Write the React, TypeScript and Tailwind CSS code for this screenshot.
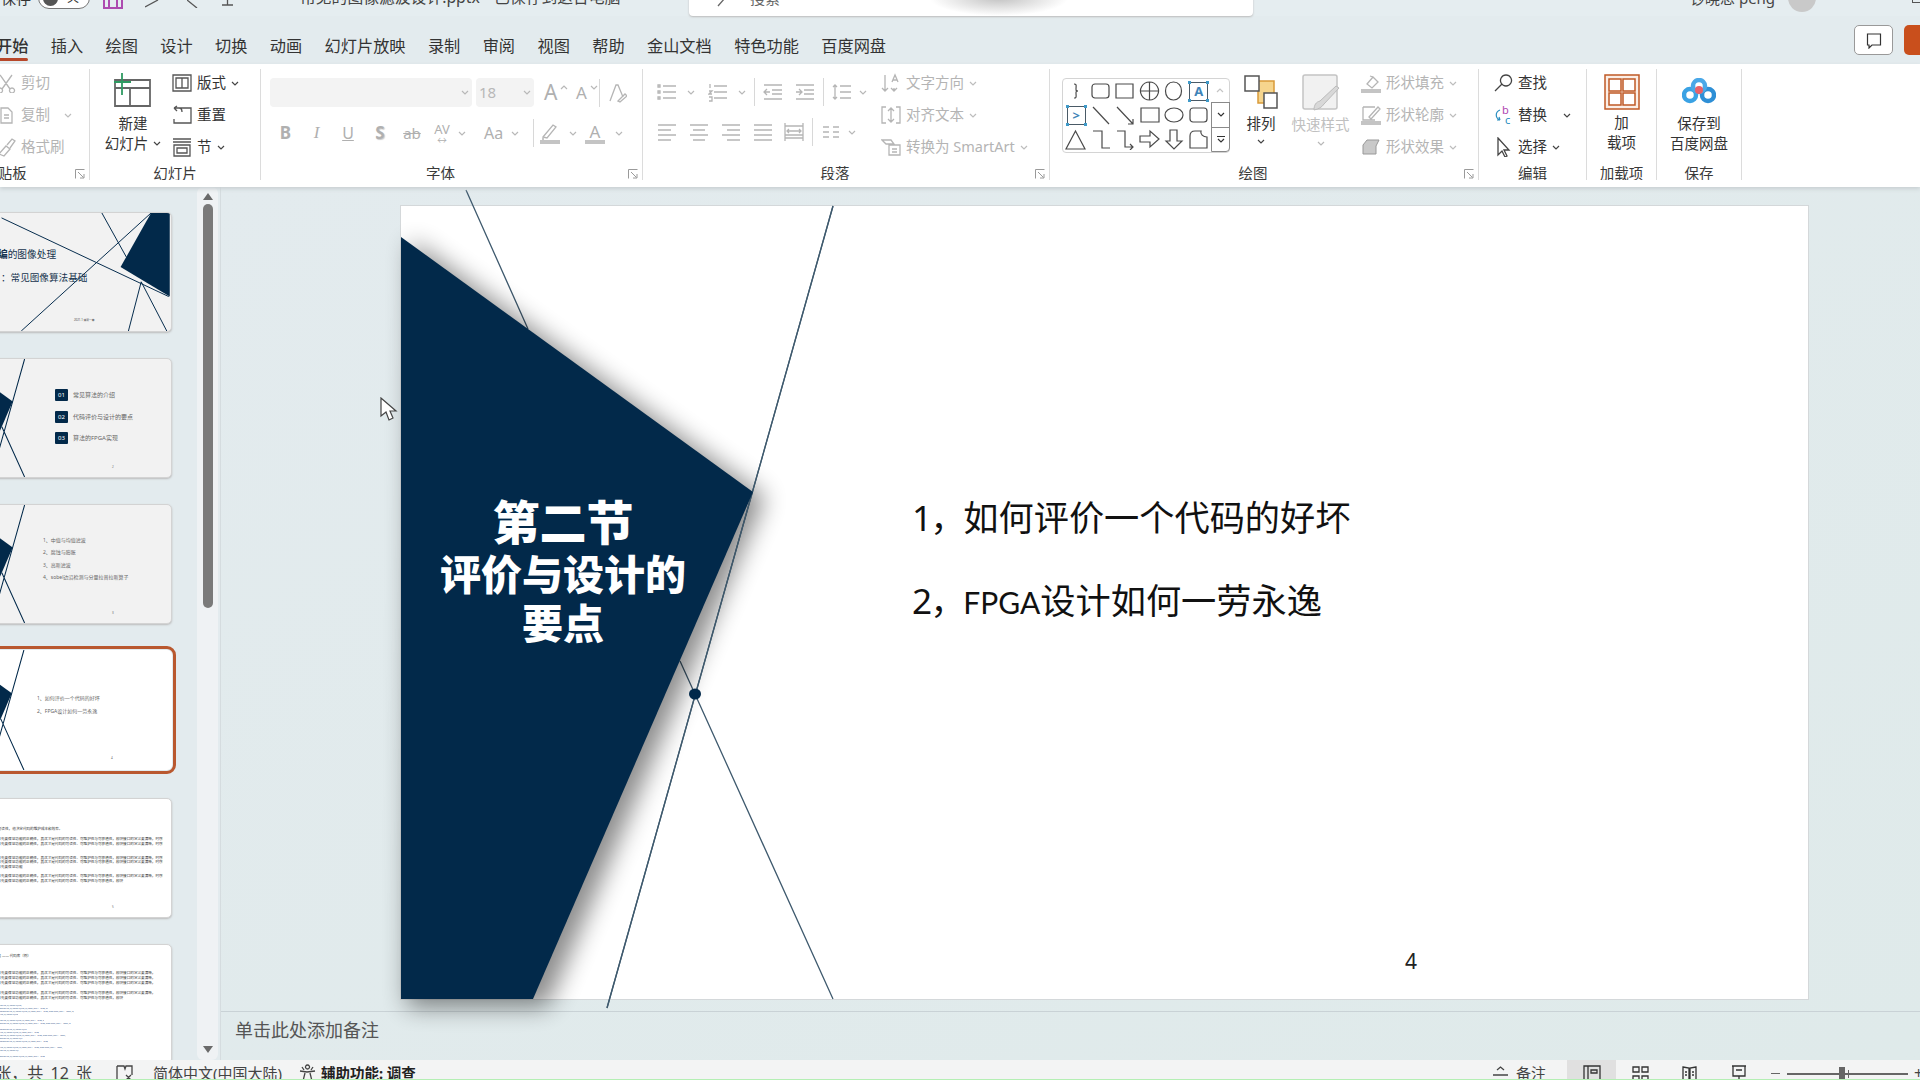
import React from 'react';

const NAVY = '#02294a';

function Chev({ c = '#b8b8b8', className = '' }: { c?: string; className?: string }) {
	return (
		<svg width="8" height="5" viewBox="0 0 8 5" className={`shrink-0 ${className}`} fill="none" stroke={c} strokeWidth="1.2">
			<path d="M1 1l3 3 3-3" />
		</svg>
	);
}

function Launcher() {
	return (
		<svg width="10" height="10" viewBox="0 0 10 10" className="absolute right-[4px] top-[3px]" fill="none" stroke="#9a9a9a" strokeWidth="1">
			<path d="M.5 9.5v-9h9M3 3l5.5 5.5M5 9h4V5" />
		</svg>
	);
}

function Group({ width, label, launcher, labelClass = '', children }: { width: string; label: string; launcher?: boolean; labelClass?: string; children: React.ReactNode }) {
	return (
		<div className={`${width} relative h-[111px] shrink-0 border-r border-[#dcdcdc]`}>
			<div className="flex h-[97px]">{children}</div>
			<div className="relative flex h-[14px] items-center justify-center overflow-hidden text-[14.5px] leading-[14px] text-[#3a3a3a]">
				<span className={`whitespace-nowrap ${labelClass}`}>{label}</span>
				{launcher && <Launcher />}
			</div>
		</div>
	);
}

function MiniRow({ icon, text, chev, dark, chevClass = 'ml-[5px]' }: { icon: React.ReactNode; text: string; chev?: boolean; dark?: boolean; chevClass?: string }) {
	return (
		<div className={`flex h-8 items-center whitespace-nowrap text-[14.5px] ${dark ? 'text-[#333]' : 'text-[#b4b4b4]'}`}>
			<span className="mr-[5px] flex w-[20px] shrink-0 justify-center">{icon}</span>
			{text}
			{chev && <Chev c={dark ? '#444' : '#bdbdbd'} className={chevClass} />}
		</div>
	);
}

const G = '#b5b5b5';

function Lines({ d, w = 20, h = 20, c = G, sw = 1.3 }: { d: string; w?: number; h?: number; c?: string; sw?: number }) {
	return (
		<svg width={w} height={h} viewBox={`0 0 ${w} ${h}`} fill="none" stroke={c} strokeWidth={sw} className="shrink-0">
			<path d={d} />
		</svg>
	);
}

const shapes = [
	'M9 3c3 0 2 2 2 5s1 2 2 2c-1 0-2-1-2 2s1 5-2 5',
	'M5 3h11a3 3 0 0 1 3 3v8a3 3 0 0 1-3 3H5a3 3 0 0 1-3-3V6a3 3 0 0 1 3-3z',
	'M2 3h17v14H2z',
	'M10.5 1a9 9 0 1 0 .01 0zM10.5 1v18M1.5 10h18',
	'M10.5 1c5 0 8 4 8 9s-3 9-8 9-8-4-8-9 3-9 8-9z',
	'',
	'',
	'M3 2l16 17',
	'M3 2l16 17m0-5v5h-5',
	'M2 3h18v14H2z',
	'M11 3c5 0 9 3 9 7s-4 7-9 7-9-3-9-7 4-7 9-7z',
	'M5 3h11a3 3 0 0 1 3 3v8a3 3 0 0 1-3 3H5a3 3 0 0 1-3-3V6a3 3 0 0 1 3-3z',
	'M10.500 2L20 20H1z',
	'M3 2h9v17h8',
	'M3 2h8v16h8m-3-3l3 3-3 3',
	'M1 7h10V2l9 8-9 8v-5H1z',
	'M7 1h7v11h5l-8 8-8-8h4z',
	'M2 7c0-3 2-5 5-5h6c-1 3 2 6 6 6v11H2z',
];

function Gallery() {
	return (
		<div className="ml-[12px] mt-[9px] flex h-[75px] w-[168px] rounded-[4px] border border-[#d4d4d4]">
			<div className="grid flex-1 grid-cols-6 grid-rows-3 py-[1px] pl-[1px]">
				{shapes.map((d, i) => (
					<div key={i} className="flex items-center justify-center">
						{i === 5 || i === 6 ? (
							<div className="relative flex h-[19px] w-[19px] items-center justify-center border border-[#4a5a66] text-[13px] font-bold leading-none text-[#3f84b8]">
								{i === 5 ? 'A' : '>'}
								<span className="absolute -left-[2px] -top-[2px] h-[3px] w-[3px] bg-[#3f9ac9]" />
								<span className="absolute -right-[2px] -top-[2px] h-[3px] w-[3px] bg-[#3f9ac9]" />
								<span className="absolute -bottom-[2px] -left-[2px] h-[3px] w-[3px] bg-[#3f9ac9]" />
								<span className="absolute -bottom-[2px] -right-[2px] h-[3px] w-[3px] bg-[#3f9ac9]" />
							</div>
						) : (
							<Lines d={d} w={22} h={21} c="#4a4a4a" sw={1.2} />
						)}
					</div>
				))}
			</div>
			<div className="flex w-[18px] flex-col">
				<div className="flex flex-1 items-center justify-center"><Chev c="#c4c4c4" className="rotate-180" /></div>
				<div className="-mr-px flex flex-1 items-center justify-center border border-[#8a8a8a]"><Chev c="#333" /></div>
				<div className="-mr-px -mt-px flex flex-1 flex-col items-center justify-center gap-[1px] rounded-br-[4px] border border-[#8a8a8a]">
					<div className="h-px w-[8px] bg-[#333]" />
					<Chev c="#333" />
				</div>
			</div>
		</div>
	);
}

function SlideArt() {
	return (
		<svg viewBox="0 0 1407 793" className="absolute inset-0 h-full w-full">
			<path d="M0 31L352 286 132 793H0z" fill={NAVY} />
			<path d="M65 -16L127 123M432 0L206 802M279 455L432 793" stroke={NAVY} strokeWidth="7" fill="none" />
		</svg>
	);
}

function Thumb({ children, selected, white, mt, art = true, num }: { children?: React.ReactNode; selected?: boolean; white?: boolean; mt?: string; art?: boolean; num?: string }) {
	return (
		<div
			className={`relative -ml-[42px] h-[120px] w-[214px] shrink-0 overflow-hidden rounded-[5px] ${white ? 'bg-white' : 'bg-[#f2f2f2]'} ${
				selected ? 'outline-[3px] outline-offset-[1px] outline-[#b9582f]' : 'border border-[#d3d3d3] shadow-[0_1px_2px_#bbb]'
			} ${mt ?? ''}`}
		>
			{art && <SlideArt />}
			{children}
			{num && <span className="absolute left-[153px] top-[107px] text-[3px] leading-none text-[#666]">{num}</span>}
		</div>
	);
}

function TinyRow({ children, className }: { children: React.ReactNode; className: string }) {
	return <p className={`absolute whitespace-nowrap leading-none ${className}`}>{children}</p>;
}

const para =
	'在代码设计过程中，首先要保证功能的正确性，其次才是代码的可读性、可维护性与可移植性，模块接口的定义要清晰，时序要收敛，面积和速度要平衡，参数化设计可以提高复用的效率，避免重复劳动。';

function ThumbPanel() {
	return (
		<div className="flex h-full w-[221px] shrink-0 overflow-hidden border-r border-[#d5dcdf] bg-[#e3ebee]">
			<div className="flex w-[197px] shrink-0 flex-col gap-[26px] pt-[25px]">
				<Thumb art={false}>
					<svg viewBox="0 0 213 120" className="absolute inset-0 h-full w-full">
						<path d="M194 0h19v85l-50-30z" fill={NAVY} />
						<path d="M42 5L212 85M62 120L194 0M144 0L169 45M171 120L184 70L210 120" stroke={NAVY} strokeWidth="1" fill="none" />
					</svg>
					<TinyRow className="left-[39px] top-[37px] text-[9.700px] text-[#16344e]">
						<b>编</b>的图像处理
					</TinyRow>
					<TinyRow className="left-[42px] top-[60px] text-[9.600px] text-[#16344e]">：常见图像算法基础</TinyRow>
					<TinyRow className="left-[115px] top-[106px] text-[2.800px] text-[#444]">2021.1 编著一审</TinyRow>
				</Thumb>
				<Thumb num="2">
					{['常见算法的介绍', '代码评价与设计的要点', '算法的FPGA实现'].map((t, i) => (
						<div key={t} className="absolute left-[96px] flex items-center gap-[5px]" style={{ top: 30 + i * 21.500 }}>
							<span className="flex h-[12px] w-[13px] items-center justify-center rounded-[1px] bg-[#02294a] text-[6px] leading-none text-white">0{i + 1}</span>
							<span className="whitespace-nowrap text-[6px] leading-none text-[#666]">{t}</span>
						</div>
					))}
				</Thumb>
				<Thumb num="3">
					{['1、中值与均值滤波', '2、腐蚀与膨胀', '3、高斯滤波', '4、sobel边沿检测与分量拉普拉斯算子'].map((t, i) => (
						<TinyRow key={t} className="left-[84px] text-[5px] text-[#666]">
							<span style={{ position: 'relative', top: 33 + i * 12.400 }}>{t}</span>
						</TinyRow>
					))}
				</Thumb>
				<Thumb selected white num="4">
					<TinyRow className="left-[79px] top-[46px] text-[5px] text-[#666]">1、如何评价一个代码的好坏</TinyRow>
					<TinyRow className="left-[79px] top-[59px] text-[5px] text-[#666]">2、FPGA设计如何一劳永逸</TinyRow>
				</Thumb>
				<Thumb white art={false} mt="mt-[2px]" num="5">
					<TinyRow className="left-[4px] top-[10px] text-[3.500px] text-[#333]">代码评价与设计</TinyRow>
					<TinyRow className="left-[28px] top-[28px] text-[3.600px] text-[#333]">代码的可读性，他决定代码的维护成本和效率。</TinyRow>
					{[38, 43, 57, 61, 66, 75, 80].map((y, i) => (
						<p key={y} className="absolute left-[6px] w-[198px] overflow-hidden whitespace-nowrap text-[3.600px] leading-none text-[#333]" style={{ top: y }}>
							{i === 6 ? para.slice(0, 44) : i === 4 ? para.slice(0, 16) : para + para}
						</p>
					))}
				</Thumb>
				<Thumb white art={false}>
					<TinyRow className="left-[28px] top-[9px] text-[3.500px] text-[#333]">一劳永逸 —— 代码库（例）</TinyRow>
					{[26, 31, 36, 46, 51].map((y, i) => (
						<p key={y} className="absolute left-[6px] w-[190px] overflow-hidden whitespace-nowrap text-[3.600px] leading-none text-[#333]" style={{ top: y }}>
							{i === 4 ? para.slice(0, 44) : para + para}
						</p>
					))}
					{[57, 60, 63, 66, 69, 75, 78, 84, 87, 90, 93, 96, 102, 105, 111].map((y, i) => (
						<p key={y} className="absolute overflow-hidden whitespace-nowrap text-[2.200px] leading-none text-[#33558a]" style={{ top: y, left: 6 + (i % 4) * 3 }}>
							{'always @(posedge clk or negedge rst_n) begin if(!rst_n) data_out <= 8\'d0; else data_out <= data_in;'.slice(0, 30 + ((i * 23) % 70))}
						</p>
					))}
				</Thumb>
			</div>
			<div className="flex h-[873px] w-[21px] shrink-0 flex-col items-center rounded-[6px] bg-[#eff2f4] pt-[6px]">
				<div className="h-0 w-0 border-x-[5px] border-b-[7px] border-x-transparent border-b-[#6a6a6a]" />
				<div className="mt-[4px] h-[404px] w-[10px] rounded-[5px] bg-[#7a7a7a]" />
				<div className="mb-[7px] mt-auto h-0 w-0 border-x-[5px] border-t-[7px] border-x-transparent border-t-[#6a6a6a]" />
			</div>
		</div>
	);
}

function MainSlide() {
	return (
		<div className="relative h-[793px] w-[1407px] bg-white shadow-[0_0_0_1px_#d4d8da]">
			<svg viewBox="0 0 1407 793" className="absolute inset-0 h-full w-full overflow-visible">
				<defs>
					<filter id="sh" x="-20%" y="-20%" width="150%" height="140%">
						<feGaussianBlur stdDeviation="12" />
					</filter>
				</defs>
				<path d="M65 -16L127 123M432 0L206 802M279 455L432 793" stroke="#3f5a6e" strokeWidth="1.300" fill="none" />
				<path d="M10 34L364 291 146 801H6z" fill="#000" opacity=".45" filter="url(#sh)" />
				<path d="M432 0L206 802" stroke="#3f5a6e" strokeWidth="1.300" fill="none" />
				<path d="M0 31L352 286 132 793H0z" fill={NAVY} />
				<ellipse cx="294" cy="488" rx="6" ry="5.500" fill={NAVY} />
			</svg>
			<div className="absolute left-[8px] top-[289px] w-[308px] text-center font-black text-white">
				<p className="text-[47px] leading-[54px]">第二节</p>
				<p className="text-[41px] leading-[50px]">评价与设计的</p>
				<p className="text-[41px] leading-[48px]">要点</p>
			</div>
			<p className="absolute left-[511px] top-[286px] whitespace-nowrap text-[35.2px] leading-[50px] text-[#111]">
				<span className="tracking-[-2px]">1，</span>如何评价一个代码的好坏
			</p>
			<p className="absolute left-[511px] top-[369px] whitespace-nowrap text-[35.2px] leading-[50px] text-[#111]">
				<span className="tracking-[-2px]">2，</span>
				<span className="font-['Lato',sans-serif] text-[30px]">FPGA</span>设计如何一劳永逸
			</p>
			<p className="absolute left-[1004px] top-[744px] text-[21px] leading-[22px] text-[#222]">4</p>
		</div>
	);
}

const tabs = ['插入', '绘图', '设计', '切换', '动画', '幻灯片放映', '录制', '审阅', '视图', '帮助', '金山文档', '特色功能', '百度网盘'];

export default function App() {
	return (
		<div className="relative h-screen w-full overflow-hidden bg-[#e3ebee] font-['Noto_Sans','Noto_Sans_CJK_SC',sans-serif] text-[#333]">
			{/* title bar, mostly cut off at the top */}
			<div className="-mt-[20px] flex h-[36px] items-center whitespace-nowrap bg-[#e5edf0] text-[15px]">
				<span className="w-[30px] shrink-0 pl-px">保存</span>
				<div className="ml-[8px] flex h-[22px] w-[52px] shrink-0 items-center justify-between rounded-full border border-[#777] bg-white px-[4px]">
					<div className="h-[15px] w-[15px] rounded-full bg-[#555]" />
					<span className="pr-[6px] text-[12px]">关</span>
				</div>
				<svg width="20" height="22" viewBox="0 0 20 22" className="ml-[13px] shrink-0" fill="none" stroke="#ad4bb0" strokeWidth="2">
					<path d="M1 1h18v20H1zM6 12h8v9H6z" />
				</svg>
				<div className="ml-[22px]"><Lines d="M0 19L13 12" w={20} c="#555" /></div>
				<div className="ml-[22px]"><Lines d="M0 12L10 20" w={20} c="#555" /></div>
				<div className="ml-[15px]"><Lines d="M0 17h11M5.500 17V10" w={20} c="#555" /></div>
				<span className="ml-[20px] h-[2px] w-[2px] shrink-0 rounded-full bg-[#555]" />
				<span className="ml-[36px] w-[304px] shrink-0 text-[15.800px] text-[#444]">常见的图像滤波设计.pptx • 已保存到这台电脑 ˅</span>
				<div className="relative ml-[85px] flex h-[36px] w-[564px] shrink-0 items-center rounded-[4px] bg-white pl-[26px] shadow-[0_1px_2px_#bbb]">
					<Lines d="M14 1a5 5 0 1 0 .01 0M10 10l-7 8" c="#666" />
					<span className="ml-[15px] text-[15px] text-[#666]">搜索</span>
					<div className="absolute left-[240px] top-0 h-[36px] w-[140px] bg-[radial-gradient(ellipse_at_center,#c2c2c2,transparent_70%)]" />
				</div>
				<span className="ml-[437px] w-[85px] shrink-0 text-[15px] text-[#444]">钞晓忠 peng</span>
				<div className="ml-[13px] h-[28px] w-[28px] shrink-0 rounded-full bg-[#c9c9c9]" />
				<div className="ml-[96px] h-[10px] w-[10px] shrink-0 border border-[#555]" />
			</div>

			{/* tabs */}
			<div className="flex h-[48px] items-center gap-[22.4px] whitespace-nowrap pt-[12px] text-[16.2px] text-[#333]">
				<div className="relative -ml-[4px] font-medium">
					开始
					<div className="absolute bottom-[-3px] left-0 h-[3px] w-full rounded-[2px] bg-[#b7472a]" />
				</div>
				{tabs.map((t) => (
					<span key={t}>{t}</span>
				))}
				<div className="-mr-[10px] -mt-[12px] ml-auto flex items-center gap-[11px]">
					<div className="flex h-[30px] w-[39px] items-center justify-center rounded-[5px] border border-[#999] bg-white">
						<Lines d="M1.500 2h13v11H6l-3 3v-3H1.500z" w={16} h={17} c="#333" sw={1.200} />
					</div>
					<div className="h-[30px] w-[26px] rounded-[5px] bg-[#c94f1c]" />
				</div>
			</div>

			{/* ribbon */}
			<div className="relative z-10 flex h-[123px] bg-white pt-[5px] shadow-[0_2px_4px_#c8cfd2]">
				<Group width="w-[90px]" label="剪贴板" launcher labelClass="-ml-[79px]">
					<div className="-ml-[4px] -mt-[2px] w-[90px] text-[#b4b4b4]">
						<MiniRow icon={<Lines d="M4 2l10 14M16 2L6 16M4 15a2.500 2.500 0 1 0 .01 0M16 15a2.500 2.500 0 1 0 .01 0" />} text="剪切" />
						<MiniRow icon={<Lines d="M5 3h7l4 4v11H5zM8 10h5M8 13h5" />} text="复制" chev chevClass="ml-[14px]" />
						<MiniRow icon={<Lines d="M3 17l7-8 4 3-6 7zM11 8l5-6 3 2-5 7" />} text="格式刷" />
					</div>
				</Group>
				<Group width="w-[171px]" label="幻灯片">
					<div className="ml-[14px] flex w-[58px] flex-col items-center text-[14.500px] leading-[20px] text-[#333]">
						<svg width="38" height="34" viewBox="0 0 38 34" className="mt-[4px]" fill="none">
							<path d="M1 7h35v26H1zM1 15h35M16 15v18" stroke="#666" strokeWidth="1.800" />
							<path d="M8 0v22M0 9h17" stroke="#2e9a62" strokeWidth="1.800" />
						</svg>
						<span className="mt-[6px]">新建</span>
						<span className="flex items-center">幻灯片<Chev c="#444" className="ml-[5px]" /></span>
					</div>
					<div className="ml-[10px] -mt-[2px]">
						<MiniRow dark icon={<Lines d="M1 2h18v16H1zM4 5h12v10H4zM10 5v10" c="#555" />} text="版式" chev />
						<MiniRow dark icon={<Lines d="M6 3h13v15H2v-4M2 3l3-2M2 3l3 3M2 3h5c2 0 3 2 3 4" c="#555" />} text="重置" />
						<MiniRow dark icon={<Lines d="M1 2h18M1 5h18M2 8h16v11H2zM5 11h10v5H5z" c="#555" />} text="节" chev />
					</div>
				</Group>
				<Group width="w-[382px]" label="字体" launcher labelClass="-ml-[22px]">
					<div className="pl-[9px]">
						<div className="mt-[9px] flex h-[29px] items-center">
							<div className="flex h-[29px] w-[202px] items-center justify-end rounded-[4px] bg-[#f3f3f3] pr-[3px]"><Chev /></div>
							<div className="ml-[4px] flex h-[29px] w-[58px] items-center justify-between rounded-[4px] bg-[#f3f3f3] px-[3px] text-[15px] text-[#b8b8b8]">18<Chev /></div>
							<span className="ml-[10px] w-[18px] text-[21px] leading-none text-[#b0b0b0]">A</span>
							<Chev className="-ml-[2px] -mt-[10px] rotate-180" />
							<span className="ml-[8px] w-[14px] text-[17px] leading-none text-[#b0b0b0]">A</span>
							<Chev className="-mt-[10px]" />
							<div className="ml-[1px] h-[28px] w-px bg-[#d8d8d8]" />
							<div className="ml-[7px]"><Lines d="M3 18L9 2h2l5 12M11 18l7-7 2 2-7 6z" /></div>
						</div>
						<div className="mt-[12px] flex h-[28px] items-center text-[#b0b0b0]">
							<span className="w-[31px] text-center text-[17px] font-bold">B</span>
							<span className="w-[31px] text-center font-['Liberation_Serif',serif] text-[17px] italic">I</span>
							<span className="w-[32px] text-center text-[16px] underline">U</span>
							<span className="w-[32px] text-center text-[17px] font-bold [text-shadow:1px_1px_1px_#ccc]">S</span>
							<span className="w-[32px] text-center text-[15px] line-through">ab</span>
							<span className="flex w-[28px] flex-col items-center text-[13px] leading-[13px]">AV<span className="text-[10px] leading-[8px]">↔</span></span>
							<Chev className="ml-[2px]" />
							<span className="ml-[18px] w-[24px] text-[16px]">Aa</span>
							<Chev className="ml-[3px]" />
							<div className="ml-[14px] h-[28px] w-px bg-[#d8d8d8]" />
							<div className="ml-[6px] flex w-[20px] flex-col items-center">
								<Lines d="M3 14L13 2l3 2-9 11zM2 16h2" h={17} />
								<div className="h-[4px] w-[20px] bg-[#c4c4c4]" />
							</div>
							<Chev className="ml-[9px]" />
							<div className="ml-[8px] flex w-[20px] flex-col items-center text-[17px] leading-[17px]">
								A
								<div className="h-[4px] w-[20px] bg-[#c4c4c4]" />
							</div>
							<Chev className="ml-[10px]" />
						</div>
					</div>
				</Group>
				<Group width="w-[407px]" label="段落" launcher labelClass="-ml-[22px]">
					<div className="w-[238px] pl-[14px]">
						<div className="mt-[9px] flex h-[28px] items-center">
							<Lines d="M6 4h13M6 10h13M6 16h13M1 3h2v2H1zM1 9h2v2H1zM1 15h2v2H1z" />
							<Chev className="ml-[10px]" />
							<div className="ml-[13px]"><Lines d="M6 4h13M6 10h13M6 16h13M2 2v4M1 9h3l-3 3h3M1 15h3v4H1" /></div>
							<Chev className="ml-[10px]" />
							<div className="ml-[8px] h-[28px] w-px bg-[#d8d8d8]" />
							<div className="ml-[8px]"><Lines d="M1 3h18M9 8h10M9 12h10M1 17h18M7 10H1m3-3l-3 3 3 3" /></div>
							<div className="ml-[12px]"><Lines d="M1 3h18M9 8h10M9 12h10M1 17h18M1 10h6m-3-3l3 3-3 3" /></div>
							<div className="ml-[8px] h-[28px] w-px bg-[#d8d8d8]" />
							<div className="ml-[8px]"><Lines d="M8 4h11M8 10h11M8 16h11M3 3v14M1 5l2-2 2 2M1 15l2 2 2-2" /></div>
							<Chev className="ml-[7px]" />
						</div>
						<div className="mt-[12px] flex h-[28px] items-center">
							<Lines d="M1 3h18M1 8h13M1 13h18M1 18h13" />
							<div className="ml-[12px]"><Lines d="M1 3h18M4 8h12M1 13h18M4 18h12" /></div>
							<div className="ml-[12px]"><Lines d="M1 3h18M6 8h13M1 13h18M6 18h13" /></div>
							<div className="ml-[12px]"><Lines d="M1 3h18M1 8h18M1 13h18M1 18h18" /></div>
							<div className="ml-[11px]"><Lines d="M1 1v18M19 1v18M1 4h18M1 16h18M1 13h18M3 9h14m-2-2l2 2-2 2M5 7L3 9l2 2" /></div>
							<div className="ml-[8px] h-[28px] w-px bg-[#d8d8d8]" />
							<div className="ml-[9px]"><Lines d="M1 5h6M1 10h6M1 15h6M11 5h6M11 10h6M11 15h6" w={18} /></div>
							<Chev className="ml-[8px]" />
						</div>
					</div>
					<div className="-mt-[2px] whitespace-nowrap">
						<MiniRow icon={<Lines d="M4 2v16M1 15l3 3 3-3M13 15v3M10 15l3 3 3-3M11 9l3-7 3 7M12 7h4" />} text="文字方向" chev />
						<MiniRow icon={<Lines d="M5 2H1v16h4M15 2h4v16h-4M10 3v14M7 6l3-3 3 3M7 14l3 3 3-3" />} text="对齐文本" chev />
						<MiniRow icon={<Lines d="M1 3h9l3 4H5zM8 8h11v10H8zM11 12h5M11 15h5" />} text="转换为 SmartArt" chev />
					</div>
				</Group>
				<Group width="w-[429px]" label="绘图" launcher labelClass="-ml-[22px]">
					<Gallery />
					<div className="ml-[14px] flex w-[34px] flex-col items-center text-[14.500px] leading-[20px] text-[#333]">
						<svg width="34" height="34" viewBox="0 0 34 34" className="mt-[6px]" fill="none">
							<path d="M14 6h16v22H14z" fill="#f6d58d" stroke="#d99a3a" strokeWidth="1.500" />
							<path d="M1 1h14v15H1z" fill="#fff" stroke="#555" strokeWidth="1.500" />
							<path d="M20 18h13v15H20z" fill="#fff" stroke="#555" strokeWidth="1.500" />
						</svg>
						<span className="mt-[4px]">排列</span>
						<Chev c="#444" className="mt-[6px]" />
					</div>
					<div className="ml-[13px] flex w-[59px] flex-col items-center whitespace-nowrap text-[14.500px] leading-[20px] text-[#c0c0c0]">
						<svg width="38" height="38" viewBox="0 0 38 38" className="mt-[5px]" fill="none">
							<rect x="1" y="1" width="34" height="34" rx="2" fill="#f1f1f1" stroke="#c4c4c4" strokeWidth="1.500" />
							<path d="M37 14L22 30c-2 3-5 5-10 6 0-5 2-8 6-9L34 12z" fill="#d8d8d8" stroke="#bbb" />
						</svg>
						<span className="mt-[2px]">快速样式</span>
						<Chev className="mt-[7px]" />
					</div>
					<div className="ml-[11px] -mt-[2px] whitespace-nowrap">
						<MiniRow icon={<div className="flex flex-col"><Lines d="M6 10l6-7 5 5-6 6zM9 2l3 1" h={15} /><div className="h-[4px] w-[20px] bg-[#c4c4c4]" /></div>} text="形状填充" chev />
						<MiniRow icon={<div className="flex flex-col"><Lines d="M2 1h12M2 1v13h12M8 11L17 1l2 2-9 10z" h={15} /><div className="h-[4px] w-[20px] bg-[#c4c4c4]" /></div>} text="形状轮廓" chev />
						<MiniRow icon={<svg width="20" height="20" viewBox="0 0 20 20"><path d="M6 3h12l-3 6v8H2V8z" fill="#c9c9c9" stroke="#999" /></svg>} text="形状效果" chev />
					</div>
				</Group>
				<Group width="w-[108px]" label="编辑">
					<div className="ml-[14px] -mt-[2px] whitespace-nowrap">
						<MiniRow dark icon={<Lines d="M13 2a5.500 5.500 0 1 0 .01 0M9 11l-7 7" c="#444" />} text="查找" />
						<MiniRow
							dark
							chev
							chevClass="ml-[16px]"
							icon={
								<svg width="20" height="20" viewBox="0 0 20 20" fill="none">
									<text x="9" y="9" fontSize="11" fill="#b044b0">b</text>
									<text x="12" y="19" fontSize="11" fill="#2a8ec0">c</text>
									<path d="M7 5C2 7 2 13 7 15m0 0l-3 0m3 0l-1-3" stroke="#2a8ec0" strokeWidth="1.200" />
								</svg>
							}
							text="替换"
						/>
						<MiniRow dark icon={<Lines d="M5 1l11 12h-5l3 6-2 1-3-6-4 4z" c="#444" />} text="选择" chev />
					</div>
				</Group>
				<Group width="w-[70px]" label="加载项">
					<div className="flex w-full flex-col items-center text-center text-[14.500px] leading-[20px] text-[#333]">
						<svg width="36" height="36" viewBox="0 0 36 36" className="mt-[5px]" fill="none" stroke="#c05a26" strokeWidth="1.500">
							<rect x="1" y="1" width="34" height="34" fill="#fbeee6" />
							<path d="M5 5h12v12H5zM19 5h12v12H19zM5 19h12v12H5zM19 19h12v12H19z" fill="#fff" />
						</svg>
						<span className="mt-[2px]">加</span>
						<span>载项</span>
					</div>
				</Group>
				<Group width="w-[85px]" label="保存">
					<div className="flex w-full flex-col items-center text-center text-[14.500px] leading-[20px] text-[#333]">
						<svg width="34" height="26" viewBox="0 0 34 26" className="mt-[9px]" fill="none" strokeWidth="4.500">
							<circle cx="8" cy="17" r="6" stroke="#3aa2e4" />
							<circle cx="26" cy="17" r="6" stroke="#2e8fd6" />
							<circle cx="17" cy="8" r="6" stroke="#4aa8e8" />
							<circle cx="17" cy="12" r="4" fill="#e8616a" stroke="none" />
						</svg>
						<span className="mt-[9px]">保存到</span>
						<span className="whitespace-nowrap">百度网盘</span>
					</div>
				</Group>
			</div>

			{/* work area */}
			<div className="flex h-[873px]">
				<ThumbPanel />
				<div className="flex flex-1 flex-col bg-gradient-to-br from-[#e3ebee] to-[#dfeaea]">
					<div className="h-[824px] pl-[180px] pt-[19px]">
						<MainSlide />
					</div>
					<div className="flex flex-1 items-center border-t border-[#c9d2d6] pb-[12px] pl-[14px] text-[18px] text-[#555]">单击此处添加备注</div>
				</div>
			</div>

			{/* status bar */}
			<div className="flex h-[20px] overflow-hidden whitespace-nowrap border-b border-[#b4efb4] bg-[#f3f4f4] text-[15px] leading-[16px] text-[#444]">
				<div className="flex w-[92px] shrink-0 justify-end overflow-hidden pt-[5px] text-[16px] [word-spacing:3px]">第 4 张，共 12 张</div>
				<div className="ml-[24px] pt-[5px]"><Lines d="M1 1h7l1 3 1-3h6v9M1 1v15h6M10 10l5 5m0-5l-5 5" w={17} h={17} c="#444" /></div>
				<span className="ml-[20px] w-[127px] shrink-0 pt-[5px]">简体中文(中国大陆)</span>
				<div className="ml-[19px] pt-[4px]"><Lines d="M8.500 1a2 2 0 1 0 .01 0M1 7l7 1 8-1M6 9l-2 8M11 9l2 8M3 3l2 3M14 3l-2 3" w={17} h={18} c="#444" /></div>
				<b className="ml-[5px] w-[96px] shrink-0 pt-[5px] text-[14.500px] text-[#222]">辅助功能: 调查</b>
				<div className="flex-1" />
				<div className="flex w-[427px] shrink-0">
					<div className="pt-[4px]"><Lines d="M0 11h15M0 16h15M4 6l3.500-3L11 6" w={15} h={18} c="#444" /></div>
					<span className="ml-[8px] w-[51px] shrink-0 pt-[5px]">备注</span>
					<div className="flex h-[20px] w-[49px] shrink-0 justify-center bg-[#e0e0e0] pt-[5px]"><Lines d="M1 1h16v18H1zM5 1v18M8 5h6v3H8z" w={18} c="#333" /></div>
					<div className="ml-[16px] pt-[6px]"><Lines d="M1 1h6v5H1zM10 1h6v5h-6zM1 10h6v5H1zM10 10h6v5h-6z" w={17} c="#333" /></div>
					<div className="ml-[33px] pt-[5px]"><Lines d="M1 2l6 1v17l-6-1zM14 2L8 3v17l6-1zM3 7h2M3 10h2M10 7h2M10 10h2" w={15} c="#333" /></div>
					<div className="ml-[34px] pt-[5px]"><Lines d="M1 1h14M2 1v10h12V1M8 11v8M5 5h6" w={16} c="#333" /></div>
					<div className="ml-[24px] flex shrink-0 items-start pt-[13px]">
						<div className="h-px w-[9px] bg-[#666]" />
						<div className="relative ml-[7px] h-[2px] w-[121px] bg-[#666]">
							<div className="absolute left-[52px] top-[-6px] h-[16px] w-[6px] bg-[#666]" />
							<div className="absolute left-[61px] top-[-3px] h-[8px] w-px bg-[#666]" />
						</div>
						<span className="ml-[6px] -mt-[8px] text-[16px]">+</span>
					</div>
				</div>
			</div>

			{/* mouse pointer */}
			<svg width="18" height="26" viewBox="0 0 18 26" className="absolute left-[380px] top-[397px] z-20" fill="#fff" stroke="#444" strokeWidth="1.200">
				<path d="M1 1v18l5-4 3 8 4-2-3-7h6z" />
			</svg>
		</div>
	);
}
